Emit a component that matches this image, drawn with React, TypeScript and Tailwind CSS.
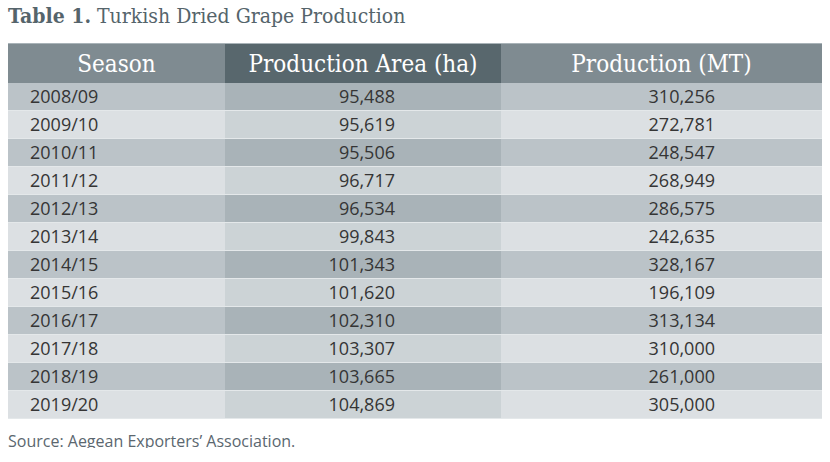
import React from "react";

const rows: [string, string, string][] = [
  ["2008/09", "95,488", "310,256"],
  ["2009/10", "95,619", "272,781"],
  ["2010/11", "95,506", "248,547"],
  ["2011/12", "96,717", "268,949"],
  ["2012/13", "96,534", "286,575"],
  ["2013/14", "99,843", "242,635"],
  ["2014/15", "101,343", "328,167"],
  ["2015/16", "101,620", "196,109"],
  ["2016/17", "102,310", "313,134"],
  ["2017/18", "103,307", "310,000"],
  ["2018/19", "103,665", "261,000"],
  ["2019/20", "104,869", "305,000"],
];

const slab = "font-['DejaVu_Serif_Condensed','DejaVu_Serif',serif]";
const sans = "font-['Open_Sans','Lato',sans-serif]";

export default function App() {
  return (
    <div className="w-[830px] h-[462px] bg-white">
      <div className="h-[448px] overflow-hidden px-[8px]">
        <div className={`${slab} text-[21px] leading-[24px] pt-[4px] text-[#55646b] whitespace-nowrap`}>
          <span className="font-bold">Table 1.</span> Turkish Dried Grape Production
        </div>
        <div className="mt-[15px] w-[814px] border-t border-[#a9b3b8]">
          <div className={`flex h-[39px] ${slab} text-[24px] text-white`}>
            <div className="w-[217px] bg-[#7f8b91] flex items-center justify-center">Season</div>
            <div className="w-[276px] bg-[#58676d] flex items-center justify-center">Production Area (ha)</div>
            <div className="flex-1 bg-[#7f8b91] flex items-center justify-center">Production (MT)</div>
          </div>
          <div className={`flex flex-col h-[333px] ${sans} text-[18px] text-[#353535]`}>
            {rows.map((r, i) => {
              const dark = i % 2 === 0;
              return (
                <div key={r[0]} className="flex flex-1 border-b border-[#e4e8ea]">
                  <div className={`w-[217px] flex items-center pl-[22px] ${dark ? "bg-[#bbc3c8]" : "bg-[#dce0e3]"}`}>{r[0]}</div>
                  <div className={`w-[276px] flex items-center justify-end pr-[106px] ${dark ? "bg-[#a9b3b8]" : "bg-[#ccd3d6]"}`}>{r[1]}</div>
                  <div className={`flex-1 flex items-center justify-end pr-[107px] ${dark ? "bg-[#bbc3c8]" : "bg-[#dce0e3]"}`}>{r[2]}</div>
                </div>
              );
            })}
          </div>
        </div>
        <div className={`${sans} text-[16px] leading-[20px] mt-[15px] text-[#5b676f]`}>
          Source: Aegean Exporters’ Association.
        </div>
      </div>
    </div>
  );
}
